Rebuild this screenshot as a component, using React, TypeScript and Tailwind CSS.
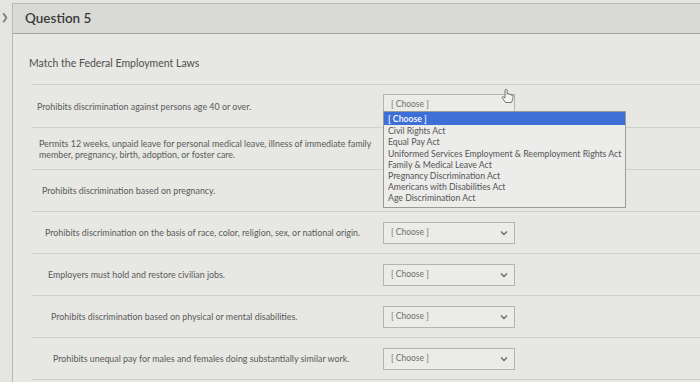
import React from "react";

const rows: { text: string[]; sel: boolean; pad: string }[] = [
  { text: ["Prohibits discrimination against persons age 40 or over."], sel: true, pad: "pl-[5px]" },
  {
    text: [
      "Permits 12 weeks, unpaid leave for personal medical leave, illness of immediate family",
      "member, pregnancy, birth, adoption, or foster care.",
    ],
    sel: false,
    pad: "pl-[7px]",
  },
  { text: ["Prohibits discrimination based on pregnancy."], sel: false, pad: "pl-[10px]" },
  { text: ["Prohibits discrimination on the basis of race, color, religion, sex, or national origin."], sel: true, pad: "pl-[13px]" },
  { text: ["Employers must hold and restore civilian jobs."], sel: true, pad: "pl-[16px]" },
  { text: ["Prohibits discrimination based on physical or mental disabilities."], sel: true, pad: "pl-[19px]" },
  { text: ["Prohibits unequal pay for males and females doing substantially similar work."], sel: true, pad: "pl-[21px]" },
];

const options = [
  "Civil Rights Act",
  "Equal Pay Act",
  "Uniformed Services Employment & Reemployment Rights Act",
  "Family & Medical Leave Act",
  "Pregnancy Discrimination Act",
  "Americans with Disabilities Act",
  "Age Discrimination Act",
];

function Chevron() {
  return (
    <svg width="8" height="6" viewBox="0 0 8 6" className="shrink-0">
      <path d="M1 1.5 L4 4.5 L7 1.5" fill="none" stroke="#6a6a6a" strokeWidth="1.4" />
    </svg>
  );
}

function Cursor() {
  return (
    <svg width="14" height="16" viewBox="0 0 14 16" className="absolute left-[501px] top-[89px]">
      <path
        d="M4 1 L4 9 L2.5 7.8 C1.6 7.2 0.8 8.2 1.4 9 L4.5 13.5 L10.5 13.5 L12 9.5 L12 6.5 C12 5.8 10.8 5.8 10.8 6.5 L10.8 6 C10.8 5.2 9.5 5.2 9.5 6 L9.5 5.5 C9.5 4.7 8.2 4.7 8.2 5.5 L8.2 5.2 C8.2 4.5 6.2 4.5 6.2 5.2 L6.2 1 C6.2 0.2 4 0.2 4 1 Z"
        fill="#f2f2f0"
        stroke="#6a6a6a"
        strokeWidth="0.9"
      />
    </svg>
  );
}

export default function App() {
  return (
    <div
      className="relative w-[700px] h-[382px] overflow-hidden bg-[#e4e4e0] flex"
      style={{ fontFamily: "Lato, 'Open Sans', sans-serif" }}
    >
      <div className="w-[12px] shrink-0 pt-[12px] pl-[1px] text-[#7a7a76] text-[9px] leading-none">❯</div>
      <div className="flex-1 flex flex-col mt-[3px] border-l border-t border-[#b8b8b4]">
        <div className="h-[30px] shrink-0 bg-[#d9d9d5] border-b border-[#a4a4a0] flex items-center pl-[12px]">
          <span className="text-[13.5px] font-semibold text-[#3a3a3a]">Question 5</span>
        </div>
        <div className="flex-1 bg-[#e7e7e3] pl-[16px]">
          <div className="pt-[22px] text-[10.5px] text-[#4f4f4f] leading-[14px]">Match the Federal Employment Laws</div>
          <div className="mt-[14px] ml-[3px] border-t border-[#cfcfcb]">
            {rows.map((r, i) => (
              <div
                key={i}
                className={`${i === 0 ? "h-[43px]" : "h-[42px]"} flex items-center border-b border-[#cfcfcb]`}
              >
                <div className={`w-[351px] ${r.pad} text-[8.9px] leading-[11px] text-[#5a5a5a] whitespace-nowrap`}>
                  {r.text.map((t, j) => (
                    <div key={j}>{t}</div>
                  ))}
                </div>
                {r.sel && (
                  <div
                    className={`w-[132px] h-[22px] border border-[#b4b4b0] bg-[#ebebe7] flex items-center justify-between pl-[7px] pr-[6px] ${
                      i === 0 ? "-mt-[3px]" : ""
                    }`}
                  >
                    <span className="text-[8.5px] text-[#707070]">[ Choose ]</span>
                    {i !== 0 && <Chevron />}
                  </div>
                )}
              </div>
            ))}
          </div>
        </div>
      </div>
      <div className="absolute left-[383px] top-[111px] w-[243px] border border-[#9a9a96] bg-[#ececea] pb-[3px] text-[8.7px] leading-[11.2px] text-[#555]">
        <div className="bg-[#3d6fd6] text-white font-semibold px-[4px] py-[1px]">[ Choose ]</div>
        {options.map((o) => (
          <div key={o} className="px-[4px] whitespace-nowrap">
            {o}
          </div>
        ))}
      </div>
      <Cursor />
    </div>
  );
}
